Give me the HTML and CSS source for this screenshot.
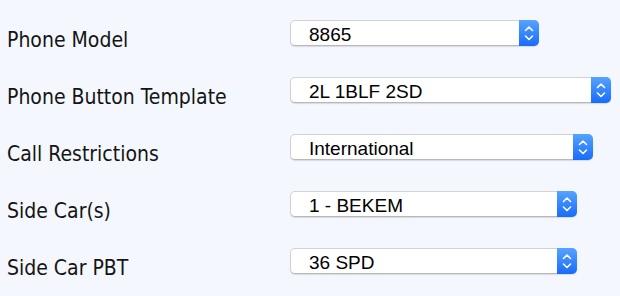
FILE: index.html
```html
<!DOCTYPE html>
<html>
<head>
  <title>Phone Settings</title>
  <link rel="stylesheet" href="styles.css">
</head>
<body>
  <div class="form">
    <div class="row">
      <div class="label">Phone Model</div>
      <div class="select w1">
        <span class="value">8865</span>
        <span class="arrows"><svg width="20" height="26" viewBox="0 0 20 26"><path d="M6.5 10.5 L10 7 L13.5 10.5 M6.5 16 L10 19.5 L13.5 16" /></svg></span>
      </div>
    </div>
    <div class="row">
      <div class="label">Phone Button Template</div>
      <div class="select w2">
        <span class="value">2L 1BLF 2SD</span>
        <span class="arrows"><svg width="20" height="26" viewBox="0 0 20 26"><path d="M6.5 10.5 L10 7 L13.5 10.5 M6.5 16 L10 19.5 L13.5 16" /></svg></span>
      </div>
    </div>
    <div class="row">
      <div class="label">Call Restrictions</div>
      <div class="select w3">
        <span class="value">International</span>
        <span class="arrows"><svg width="20" height="26" viewBox="0 0 20 26"><path d="M6.5 10.5 L10 7 L13.5 10.5 M6.5 16 L10 19.5 L13.5 16" /></svg></span>
      </div>
    </div>
    <div class="row">
      <div class="label">Side Car(s)</div>
      <div class="select w4">
        <span class="value">1 - BEKEM</span>
        <span class="arrows"><svg width="20" height="26" viewBox="0 0 20 26"><path d="M6.5 10.5 L10 7 L13.5 10.5 M6.5 16 L10 19.5 L13.5 16" /></svg></span>
      </div>
    </div>
    <div class="row">
      <div class="label">Side Car PBT</div>
      <div class="select w4">
        <span class="value">36 SPD</span>
        <span class="arrows"><svg width="20" height="26" viewBox="0 0 20 26"><path d="M6.5 10.5 L10 7 L13.5 10.5 M6.5 16 L10 19.5 L13.5 16" /></svg></span>
      </div>
    </div>
  </div>
</body>
</html>
```

FILE: styles.css
```css
body {
  margin: 0;
  padding: 20px 0 0 7px;
  background-color: #f4f8fe;
}
.form {
  display: flex;
  flex-direction: column;
}
.row {
  display: flex;
  align-items: flex-start;
  height: 57px;
}
.label {
  width: 283px;
  padding-top: 7px;
  font-family: "DejaVu Sans Condensed", "DejaVu Sans", sans-serif;
  font-stretch: condensed;
  font-size: 21px;
  line-height: 26px;
  color: #141414;
}
.select {
  position: relative;
  box-sizing: border-box;
  height: 26px;
  padding: 3px 0 0 18px;
  background-color: #fff;
  border: 1px solid #d2d2d2;
  border-bottom-color: #b8b8b8;
  border-radius: 5px;
  box-shadow: 0 1px 1px rgba(0,0,0,0.12);
  font-family: "Liberation Sans", Arial, sans-serif;
  font-size: 19px;
  line-height: 21px;
  color: #000;
}
.w1 { width: 249px; }
.w2 { width: 321px; }
.w3 { width: 303px; }
.w4 { width: 287px; }
.arrows {
  position: absolute;
  top: -1px;
  right: -1px;
  width: 20px;
  height: 26px;
  border-radius: 0 5px 5px 0;
  background: linear-gradient(#56a3ff, #186cfa);
}
.arrows svg {
  display: block;
}
.arrows path {
  fill: none;
  stroke: #fff;
  stroke-width: 1.6;
  stroke-linecap: round;
  stroke-linejoin: round;
}
```
